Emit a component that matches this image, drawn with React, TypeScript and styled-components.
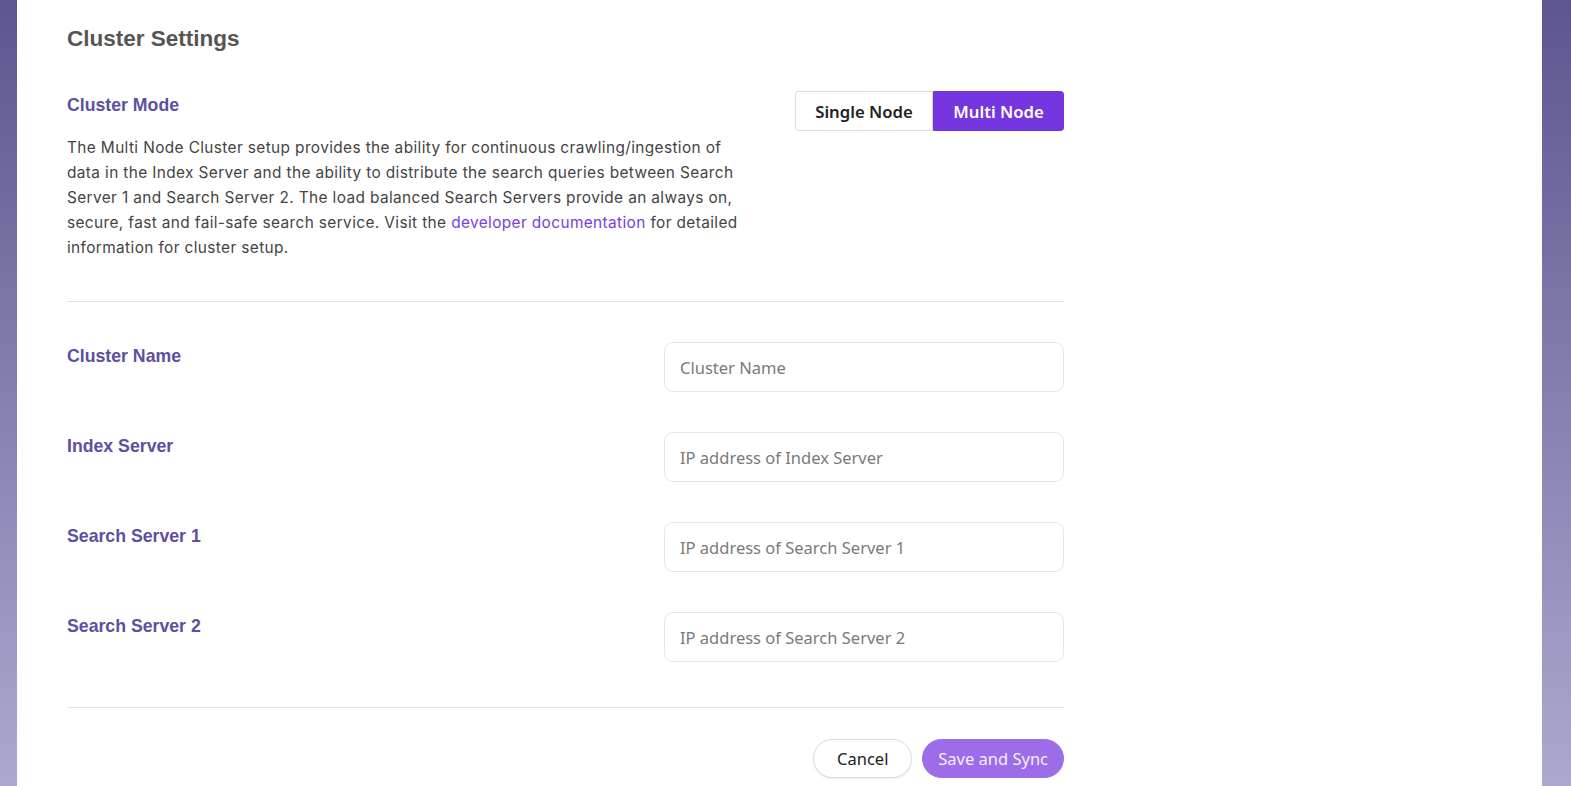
import React, { useState } from "react";
import styled, { createGlobalStyle } from "styled-components";

const GlobalStyle = createGlobalStyle`
  html, body {
    margin: 0;
    padding: 0;
    height: 100%;
  }
  body {
    background: linear-gradient(180deg, #5d5590 0%, #8983b3 55%, #aba9cd 100%);
    font-family: Inter, "Noto Sans", sans-serif;
    overflow: hidden;
  }
`;

const Page = styled.div`
  display: flex;
  height: 786px;
  padding: 0 29px 0 17px;
`;

const Panel = styled.main`
  flex: 1;
  background: #fff;
  padding: 25px 50px 0;
`;

const Content = styled.div`
  width: 997px;
`;

const Title = styled.h1`
  margin: 0;
  font-family: "Liberation Sans", Arial, sans-serif;
  font-size: 22.5px;
  font-weight: 700;
  color: #555;
  line-height: 28px;
`;

const ModeRow = styled.section`
  display: flex;
  justify-content: space-between;
  align-items: flex-start;
  padding: 41px 0 41px;
  border-bottom: 1px solid #e4e4e8;
`;

const ModeText = styled.div`
  width: 676px;
`;

const Label = styled.h3`
  margin: 0;
  font-family: "Liberation Sans", Arial, sans-serif;
  font-size: 17.7px;
  font-weight: 700;
  color: #5e4fa2;
  line-height: 22px;
`;

const Description = styled.p`
  margin: 19px 0 0;
  font-size: 15.4px;
  letter-spacing: 0.38px;
  line-height: 25px;
  color: #444;
`;

const Link = styled.a`
  color: #7a3be0;
  text-decoration: none;
`;

const Toggle = styled.div`
  display: flex;
  margin-top: -3px;
  border-radius: 3px;
  overflow: hidden;
`;

const ToggleButton = styled.button<{ $active?: boolean }>`
  height: 40px;
  padding: 0;
  white-space: nowrap;
  font-family: "Noto Sans", "Open Sans", sans-serif;
  font-size: 16.7px;
  font-weight: 600;
  cursor: pointer;
  border: 1px solid ${(p) => (p.$active ? "#7536e0" : "#dadada")};
  background: ${(p) => (p.$active ? "#7536e0" : "#fff")};
  color: ${(p) => (p.$active ? "#fff" : "#222")};
  &:first-child {
    border-radius: 3px 0 0 3px;
    width: 138px;
  }
  &:last-child {
    border-radius: 0 3px 3px 0;
    width: 131px;
  }
`;

const Fields = styled.section`
  display: flex;
  flex-direction: column;
  gap: 40px;
  padding: 40px 0 45px;
  border-bottom: 1px solid #e4e4e8;
`;

const FieldRow = styled.div`
  display: flex;
  justify-content: space-between;
  align-items: flex-start;
`;

const FieldLabel = styled(Label)`
  padding-top: 3px;
`;

const Input = styled.input`
  box-sizing: border-box;
  width: 400px;
  height: 50px;
  padding: 0 15px;
  border: 1px solid #e6e6ea;
  border-radius: 9px;
  font-family: "Noto Sans", "Open Sans", sans-serif;
  font-size: 16.5px;
  color: #333;
  outline: none;
  &::placeholder {
    color: #7a7a7a;
  }
`;

const Actions = styled.div`
  display: flex;
  justify-content: flex-end;
  gap: 10px;
  padding-top: 31px;
`;

const PillButton = styled.button<{ $primary?: boolean }>`
  height: 39px;
  min-width: 99px;
  padding: 0 15px;
  border-radius: 20px;
  white-space: nowrap;
  font-family: "Noto Sans", "Open Sans", sans-serif;
  font-size: 16.5px;
  cursor: pointer;
  border: 1px solid ${(p) => (p.$primary ? "#9c6ce9" : "#dcdcdc")};
  background: ${(p) => (p.$primary ? "#9c6ce9" : "#fff")};
  color: ${(p) => (p.$primary ? "#f4eefe" : "#222")};
  box-shadow: ${(p) => (p.$primary ? "none" : "0 1px 2px rgba(0,0,0,0.08)")};
`;

const fields = [
  { label: "Cluster Name", placeholder: "Cluster Name" },
  { label: "Index Server", placeholder: "IP address of Index Server" },
  { label: "Search Server 1", placeholder: "IP address of Search Server 1" },
  { label: "Search Server 2", placeholder: "IP address of Search Server 2" },
];

export default function App() {
  const [mode, setMode] = useState<"single" | "multi">("multi");

  return (
    <>
      <GlobalStyle />
      <Page>
        <Panel>
          <Content>
            <Title>Cluster Settings</Title>
            <ModeRow>
              <ModeText>
                <Label>Cluster Mode</Label>
                <Description>
                  The Multi Node Cluster setup provides the ability for continuous
                  crawling/ingestion of data in the Index Server and the ability to
                  distribute the search queries between Search Server 1 and Search
                  Server 2. The load balanced Search Servers provide an always on,
                  secure, fast and fail-safe search service. Visit the{" "}
                  <Link href="#">developer documentation</Link> for detailed
                  information for cluster setup.
                </Description>
              </ModeText>
              <Toggle>
                <ToggleButton $active={mode === "single"} onClick={() => setMode("single")}>
                  Single Node
                </ToggleButton>
                <ToggleButton $active={mode === "multi"} onClick={() => setMode("multi")}>
                  Multi Node
                </ToggleButton>
              </Toggle>
            </ModeRow>
            <Fields>
              {fields.map((f) => (
                <FieldRow key={f.label}>
                  <FieldLabel>{f.label}</FieldLabel>
                  <Input placeholder={f.placeholder} />
                </FieldRow>
              ))}
            </Fields>
            <Actions>
              <PillButton>Cancel</PillButton>
              <PillButton $primary>Save and Sync</PillButton>
            </Actions>
          </Content>
        </Panel>
      </Page>
    </>
  );
}
